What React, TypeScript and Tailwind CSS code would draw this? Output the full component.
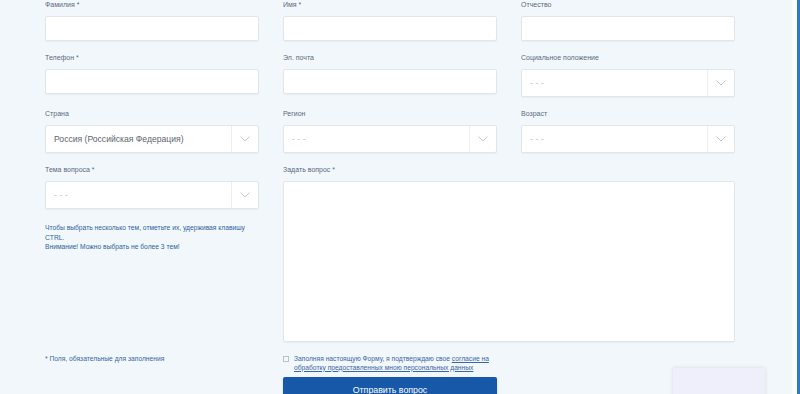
import React from 'react';

const Chevron = () => (
	<svg width="10" height="6" viewBox="0 0 10 6" fill="none">
		<path d="M0.5 0.5l4.5 4.5L9.5 0.5" stroke="#bcc4cd" strokeWidth="0.9" />
	</svg>
);

const Label = ({ children }: { children: React.ReactNode }) => (
	<div className="h-[16px] leading-[10px] text-[7px] text-[#5a6a80]">{children}</div>
);

const TextInput = () => (
	<div className="h-[25px] bg-white border border-[#e1e6ec] rounded-[2px] shadow-[0_1px_1px_rgba(0,0,0,0.04)]" />
);

const Select = ({ value, dark }: { value: string; dark?: boolean }) => (
	<div className="h-[28px] flex flex-row bg-white border border-[#e1e6ec] rounded-[2px] shadow-[0_1px_1px_rgba(0,0,0,0.04)]">
		<div
			className={`flex-1 flex items-center pl-[8px] ${
				dark ? 'text-[8.6px] text-[#5c6670]' : 'text-[8px] text-[#aab2bb] tracking-[0.3px]'
			}`}>
			{value}
		</div>
		<div className="w-[27px] border-l border-[#eceff3] flex items-center justify-center">
			<Chevron />
		</div>
	</div>
);

const Field = ({
	label,
	select,
	value = '- - -',
	dark,
}: {
	label: string;
	select?: boolean;
	value?: string;
	dark?: boolean;
}) => (
	<div className="flex flex-col">
		<Label>{label}</Label>
		{select ? <Select value={value} dark={dark} /> : <TextInput />}
	</div>
);

export default function App() {
	return (
		<div
			className="w-[800px] h-[394px] overflow-hidden flex flex-row bg-[#f2f7fb] relative"
			style={{ fontFamily: '"Liberation Sans", Arial, sans-serif' }}>
			<div className="flex-1 pl-[45px]">
				<div className="grid grid-cols-[214px_214px_214px] gap-x-[24px] gap-y-[12px]">
					<Field label="Фамилия *" />
					<Field label="Имя *" />
					<Field label="Отчество" />
					<Field label="Телефон *" />
					<Field label="Эл. почта" />
					<Field label="Социальное положение" select />
					<Field label="Страна" select value="Россия (Российская Федерация)" dark />
					<Field label="Регион" select />
					<Field label="Возраст" select />
					<div className="flex flex-col">
						<Field label="Тема вопроса *" select />
						<div className="mt-[14px] text-[6.7px] leading-[9.5px] text-[#2f5f9e]">
							Чтобы выбрать несколько тем, отметьте их, удерживая клавишу CTRL.
							<br />
							Внимание! Можно выбрать не более 3 тем!
						</div>
					</div>
					<div className="col-span-2 flex flex-col">
						<Label>Задать вопрос *</Label>
						<div className="h-[161px] bg-white border border-[#e1e6ec] rounded-[2px] shadow-[0_1px_1px_rgba(0,0,0,0.04)]" />
					</div>
				</div>
				<div className="grid grid-cols-[214px_214px] gap-x-[24px] mt-[13px]">
					<div className="text-[6.7px] leading-[8.5px] text-[#3a66a6]">* Поля, обязательные для заполнения</div>
					<div className="flex flex-col">
						<div className="flex flex-row gap-[5px]">
							<div className="w-[6px] h-[6px] mt-[1px] border border-[#b8c0c8] bg-[#f5f7f9] shrink-0" />
							<div className="flex flex-col text-[6.7px] leading-[8.5px] text-[#3a66a6]">
								<div>
									Заполняя настоящую Форму, я подтверждаю свое{' '}
									<span className="underline">согласие на</span>
								</div>
								<div className="underline">обработку предоставленных мною персональных данных</div>
							</div>
						</div>
						<button className="mt-[5px] h-[28px] w-[214px] bg-[#1858a8] rounded-[2px] text-white text-[8.8px] flex items-center justify-center shadow-[0_1px_2px_rgba(0,0,0,0.2)]">
							Отправить вопрос
						</button>
					</div>
				</div>
			</div>
			<div className="w-[5px] bg-[#fafcfe]" />
			<div className="w-[3px] bg-[#2d7cc3]" />
			<div className="absolute left-[673px] top-[368px] w-[92px] h-[40px] bg-[#efeefb] shadow-[0_0_4px_rgba(0,0,0,0.12)]" />
		</div>
	);
}
